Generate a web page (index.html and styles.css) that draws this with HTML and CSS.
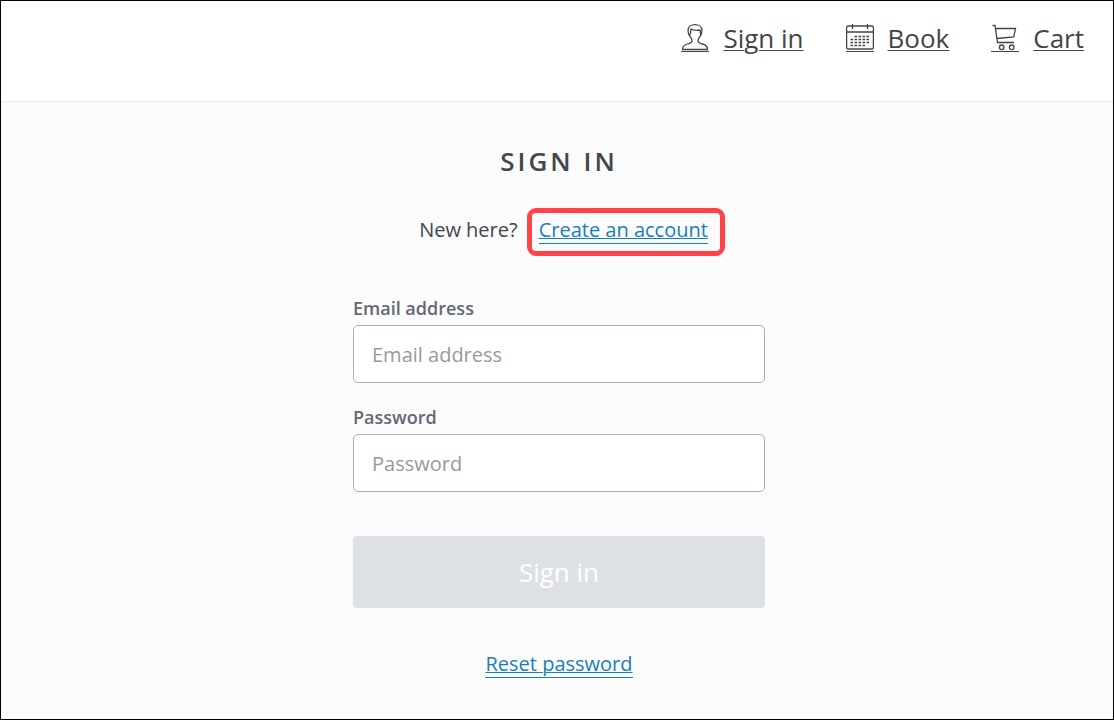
FILE: index.html
```html
<!DOCTYPE html>
<html lang="en">
<head>
  <meta charset="UTF-8" />
  <title>Sign in</title>
  <meta name="viewport" content="width=device-width, initial-scale=1.0" />
  <link rel="stylesheet" href="styles.css">
</head>
<body>
  <header class="site-header">
    <nav class="site-nav">
      <a href="#">
        <svg class="icon" viewBox="0 0 28 27" aria-hidden="true">
          <path d="M11 17c0-2-1-3-2-4.500C7.500 10.500 7 8.500 7 6.500 7 3 10 0.700 14 0.700s7 2.300 7 5.800c0 2-.5 4-2 6-1 1.500-2 2.500-2 4.500 0 2 2 2.300 4.500 3 3.500 1 5 2.500 5 5.500h-25c0-3 1.500-4.500 5-5.500 2.500-.7 4.500-1 4.500-3z" />
          <path d="M8.500 11.500c1.500-1.500 1-3.500 1.500-6.500 2.500 1.500 6 1.500 9 1 .5 1.500 0 3.500 1 5" />
        </svg>
        <span>Sign in</span>
      </a>
      <a href="#">
        <svg class="icon" viewBox="0 0 28 27" aria-hidden="true">
          <rect x="0.600" y="2" width="26.800" height="23" rx="1.500" />
          <path d="M0.500 8h27M6.500 0v5M21.500 0v5" />
          <path class="dates" d="M8.500 12.500h15M4.500 15.500h19M4.500 18.500h19M4.500 21.500h15" />
        </svg>
        <span>Book</span>
      </a>
      <a href="#">
        <svg class="icon" viewBox="0 0 28 27" aria-hidden="true">
          <path d="M1.500 1.500h2.500l2.500 17h16.500M4.500 4.500h20l-1.700 8.500L6 14.500" />
          <circle cx="10.700" cy="23.300" r="2.300" />
          <circle cx="20.700" cy="23.300" r="2.300" />
        </svg>
        <span>Cart</span>
      </a>
    </nav>
  </header>

  <main class="sign-in">
    <h1>Sign in</h1>
    <p class="new-here">New here? <span class="highlight"><a class="link" href="#">Create an account</a></span></p>

    <form class="form">
      <div class="field">
        <label for="email">Email address</label>
        <input id="email" type="email" placeholder="Email address">
      </div>
      <div class="field">
        <label for="password">Password</label>
        <input id="password" type="password" placeholder="Password">
      </div>
      <button type="submit" disabled>Sign in</button>
    </form>

    <a class="link" href="#">Reset password</a>
  </main>
</body>
</html>
```
FILE: styles.css
```css
:root {
  --text: #43474d;
  --link: #197fb8;
  --border: #a9afba;
  --highlight: #ff4349;
}

* {
  box-sizing: border-box;
}

body {
  font-family: "Open Sans", sans-serif;
  font-size: 20px;
  line-height: 28px;
  color: var(--text);
  background: #fbfbfb;
  border: 1px solid #000;
  margin: 0;
  min-height: 100vh;
}

.site-header {
  background: white;
  border-bottom: 1px solid #ebebeb;
  padding: 19px 29px 45px;
}

.site-nav {
  display: flex;
  justify-content: flex-end;
  gap: 42px;
}

.site-nav a {
  display: flex;
  align-items: center;
  gap: 14px;
  color: #444;
  font-size: 26px;
  line-height: 36px;
  text-decoration: underline;
  text-decoration-thickness: 1px;
  text-underline-offset: 2px;
}

.icon {
  box-sizing: content-box;
  width: 28px;
  height: 27px;
  border-bottom: 1px solid #444;
  fill: none;
  stroke: #444;
  stroke-width: 1.3;
}

.icon .dates {
  stroke-width: 1.3;
  stroke-dasharray: 2.6 1.4;
}

.sign-in {
  display: flex;
  flex-direction: column;
  align-items: center;
  padding: 41px 0 20px 4px;
}

h1 {
  margin: 0;
  font-size: 26px;
  font-weight: 600;
  line-height: 36px;
  letter-spacing: 3px;
  text-transform: uppercase;
}

.new-here {
  display: flex;
  align-items: baseline;
  gap: 9px;
  margin: 29px 0 40px 26px;
}

.highlight {
  display: flex;
  border: 5px solid var(--highlight);
  border-radius: 9px;
  padding: 4px 12px 7px 7px;
}

.link {
  color: var(--link);
  line-height: 25px;
  padding-bottom: 1px;
  border-bottom: 1px solid var(--link);
  text-decoration-thickness: 1px;
  text-underline-offset: 1px;
}

.form {
  width: 100%;
  max-width: 412px;
  margin-bottom: 43px;
}

.field {
  margin-bottom: 22px;
}

.field label {
  display: block;
  color: #626973;
  font-size: 18px;
  font-weight: 600;
  line-height: 24px;
  margin-bottom: 5px;
}

.field input {
  display: block;
  width: 100%;
  height: 58px;
  padding: 0 18px;
  background: white;
  border: 1px solid var(--border);
  border-radius: 5px;
  font: inherit;
}

.field input::placeholder {
  color: #999;
}

.form button {
  width: 100%;
  height: 72px;
  margin-top: 22px;
  background: #dde0e5;
  color: white;
  border: none;
  border-radius: 4px;
  font-family: inherit;
  font-size: 26px;
}
```
